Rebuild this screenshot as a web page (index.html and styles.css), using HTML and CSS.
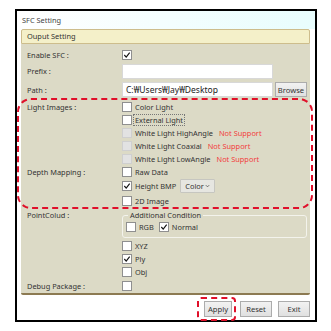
FILE: index.html
```html
<!DOCTYPE html>
<html lang="en">
<head>
  <meta charset="UTF-8" />
  <title>SFC Setting</title>
  <link rel="stylesheet" href="styles.css">
</head>
<body>

  <div class="window">
    <div class="title">SFC Setting</div>

    <div class="group">
      <div class="group-head">Ouput Setting</div>
      <div class="panel">

        <div class="row r-enable">
          <span class="label">Enable SFC :</span>
          <span class="box on"><svg viewBox="0 0 9 9"><path d="M1.5 4.5 L3.6 6.8 L7.5 1.8" /></svg></span>
        </div>

        <div class="row r-prefix">
          <span class="label">Prefix :</span>
          <span class="textbox"></span>
        </div>

        <div class="row r-path">
          <span class="label">Path :</span>
          <span class="textbox">C:₩Users₩Jay₩Desktop</span>
          <button class="btn browse">Browse</button>
        </div>

        <div class="row">
          <span class="label">Light Images :</span>
          <span class="box"></span><span class="text">Color Light</span>
        </div>
        <div class="row">
          <span class="label"></span>
          <span class="box"></span><span class="text focus">External Light</span>
        </div>
        <div class="row">
          <span class="label"></span>
          <span class="box off"></span><span class="text">White Light HighAngle</span><span class="warn">Not Support</span>
        </div>
        <div class="row">
          <span class="label"></span>
          <span class="box off"></span><span class="text">White Light Coaxial</span><span class="warn">Not Support</span>
        </div>
        <div class="row">
          <span class="label"></span>
          <span class="box off"></span><span class="text">White Light LowAngle</span><span class="warn">Not Support</span>
        </div>

        <div class="row">
          <span class="label">Depth Mapping :</span>
          <span class="box"></span><span class="text">Raw Data</span>
        </div>
        <div class="row r-tall">
          <span class="label"></span>
          <span class="box on"><svg viewBox="0 0 9 9"><path d="M1.5 4.5 L3.6 6.8 L7.5 1.8" /></svg></span>
          <span class="text">Height BMP</span>
          <span class="combo">Color <svg viewBox="0 0 6 4"><path d="M1 1 L3 3 L5 1" /></svg></span>
        </div>
        <div class="row">
          <span class="label"></span>
          <span class="box"></span><span class="text">2D Image</span>
        </div>

        <div class="row r-point">
          <span class="label">PointColud :</span>
          <fieldset class="cond">
            <legend>Additional Condition</legend>
            <span class="box"></span><span class="text">RGB</span>
            <span class="box on"><svg viewBox="0 0 9 9"><path d="M1.5 4.5 L3.6 6.8 L7.5 1.8" /></svg></span><span class="text">Normal</span>
          </fieldset>
        </div>
        <div class="row">
          <span class="label"></span>
          <span class="box"></span><span class="text">XYZ</span>
        </div>
        <div class="row">
          <span class="label"></span>
          <span class="box on"><svg viewBox="0 0 9 9"><path d="M1.5 4.5 L3.6 6.8 L7.5 1.8" /></svg></span><span class="text">Ply</span>
        </div>
        <div class="row">
          <span class="label"></span>
          <span class="box"></span><span class="text">Obj</span>
        </div>

        <div class="row r-debug">
          <span class="label">Debug Package :</span>
          <span class="box"></span>
        </div>

      </div>
    </div>

    <div class="actions">
      <span class="mark"><button class="btn">Apply</button></span>
      <button class="btn">Reset</button>
      <button class="btn">Exit</button>
    </div>

    <div class="highlight"></div>
  </div>

</body>
</html>
```

FILE: styles.css
```css
body {
  margin: 0;
  font-family: "Noto Sans", "Open Sans", sans-serif;
  font-size: 7.4px;
  color: #333;
  background: #fff;
}

.window {
  position: relative;
  margin: 9px 0 0 15px;
  width: 298px;
  height: 309px;
  border: 2px solid #000;
  background: #fff;
}

.title {
  height: 18px;
  line-height: 18px;
  padding-left: 5px;
  background: linear-gradient(to right, #fff, #e8fdfd);
  color: #444;
}

.group {
  margin: 0 5px 0 4px;
}

.group-head {
  height: 13px;
  line-height: 13px;
  padding-left: 5px;
  background: #f4f0c9;
  border: 1px solid #cdbd8c;
  border-radius: 2px 2px 0 0;
}

.panel {
  background: #dcdac6;
  border-bottom: 2px solid #8c7a52;
  border-radius: 0 0 2px 2px;
  padding: 3px 0 0 6px;
}

.row {
  display: flex;
  align-items: center;
  height: 13px;
}

.label {
  width: 95px;
  flex: none;
}

.r-enable { height: 16px; }
.r-prefix { height: 16px; }
.r-path { height: 17px; margin-top: 2px; margin-bottom: 2px; }
.r-tall { height: 16px; }
.r-point { height: 32px; align-items: flex-start; }
.r-point .label { margin-top: 3px; }
.r-debug { height: 15px; }

.box {
  width: 8px;
  height: 8px;
  flex: none;
  background: #fff;
  border: 1px solid #8f8f8f;
  display: flex;
}

.box svg {
  width: 8px;
  height: 8px;
}

.box path {
  fill: none;
  stroke: #111;
  stroke-width: 1.3;
}

.box.off {
  background: #e2e2e2;
  border-color: #cfcfcf;
}

.text {
  margin-left: 3px;
}

.focus {
  outline: 1px dotted #777;
  outline-offset: 0;
  padding: 0 1px;
  margin-left: 2px;
}

.warn {
  margin-left: 6px;
  color: #f23c3c;
}

.textbox {
  width: 146px;
  height: 13px;
  line-height: 13px;
  padding-left: 3px;
  background: #fff;
  border: 1px solid #d8d8d8;
  font-size: 8.5px;
  color: #222;
}

.btn {
  font-family: inherit;
  font-size: 7.6px;
  color: #333;
  padding: 0;
  background: linear-gradient(#f2f2f2, #e0e0e0);
  border: 1px solid #acacac;
  height: 16px;
  width: 32px;
}

.browse {
  margin-left: 2px;
  height: 15px;
}

.combo {
  display: flex;
  align-items: center;
  justify-content: space-between;
  margin-left: 4px;
  width: 35px;
  height: 14px;
  padding: 0 4px;
  box-sizing: border-box;
  background: #e6e6e1;
  border: 1px solid #c6c6c0;
  border-radius: 1px;
}

.combo svg {
  width: 5px;
  height: 4px;
}

.combo path {
  fill: none;
  stroke: #555;
  stroke-width: 1;
}

.cond {
  display: flex;
  align-items: center;
  margin: 4px 0 0;
  padding: 0 0 3px 3px;
  width: 185px;
  height: 27px;
  box-sizing: border-box;
  border: 1px solid #f3f3ec;
  border-radius: 3px;
}

.cond legend {
  padding: 0 2px;
  margin-left: 2px;
  line-height: 9px;
}

.cond .box + .text {
  margin-right: 5px;
}

.actions {
  display: flex;
  justify-content: flex-end;
  align-items: center;
  gap: 6px;
  padding: 6px 5px 0 0;
}

.mark {
  display: flex;
  padding: 2px 2px 2px 5px;
  border: 2px dashed #e0102a;
  border-radius: 4px;
  margin: -4px -2px -4px 0;
}

.mark .btn {
  width: 28px;
}

.highlight {
  position: absolute;
  left: 0;
  top: 87px;
  width: 292px;
  height: 107px;
  border: 2px dashed #e0102a;
  border-radius: 14px;
}
```
